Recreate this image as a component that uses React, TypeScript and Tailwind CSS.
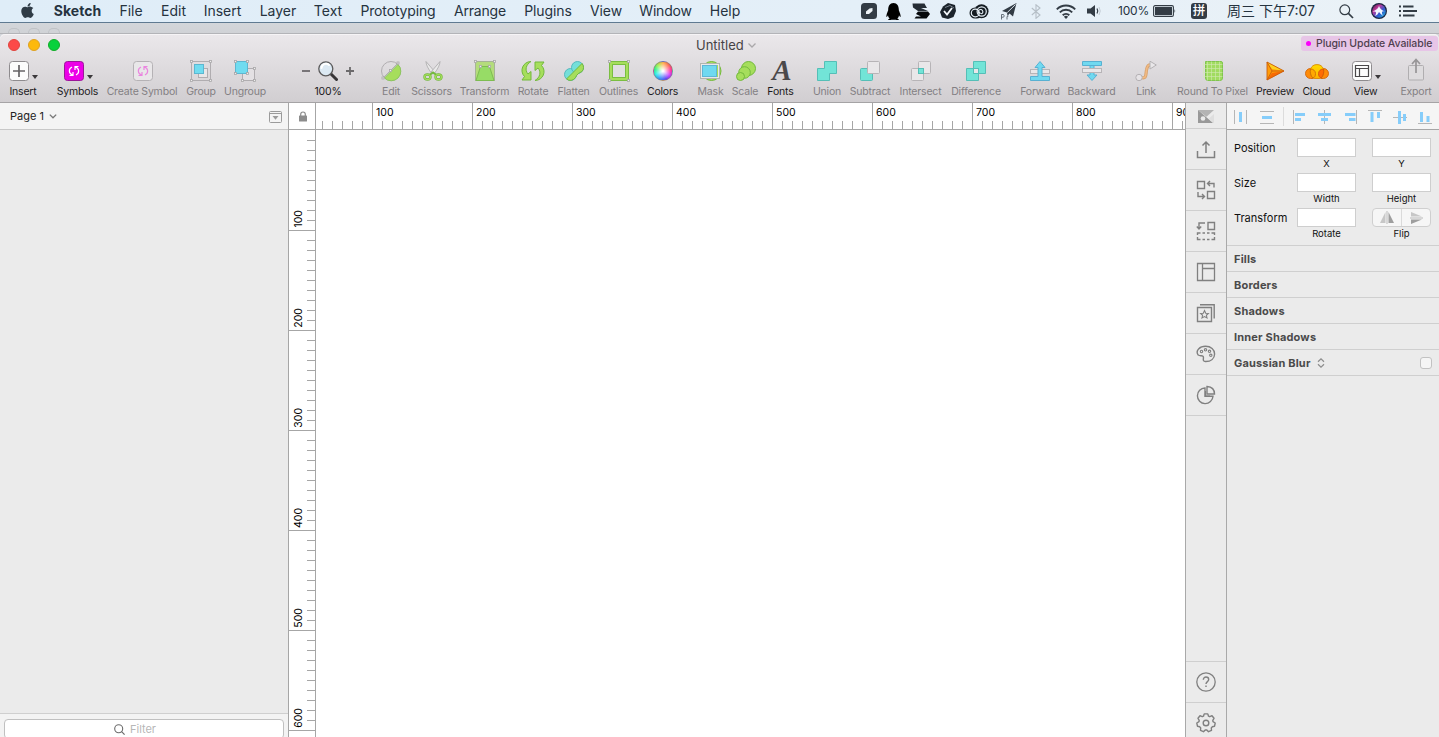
import React from "react";
import { FaApple, FaQq } from "react-icons/fa";

type SvgProps = { w: number; h: number; children: React.ReactNode; className?: string };
const S = ({ w, h, children, className = "" }: SvgProps) => (
  <svg width={w} height={h} viewBox={`0 0 ${w} ${h}`} fill="none" className={`block shrink-0 ${className}`}>
    {children}
  </svg>
);

const menus: [string, string][] = [
  ["Sketch", "ml-[16px] w-[51px] font-bold"],
  ["File", "ml-[15px] w-[26px]"],
  ["Edit", "ml-[15px] w-[29px]"],
  ["Insert", "ml-[14px] w-[41px]"],
  ["Layer", "ml-[15px] w-[40px]"],
  ["Text", "ml-[15px] w-[30px]"],
  ["Prototyping", "ml-[15px] w-[80px] tracking-[-0.15px]"],
  ["Arrange", "ml-[15px] w-[54px] tracking-[-0.2px]"],
  ["Plugins", "ml-[16px] w-[50px] tracking-[-0.1px]"],
  ["View", "ml-[16px] w-[34px] tracking-[-0.1px]"],
  ["Window", "ml-[15px] w-[55px] tracking-[-0.2px]"],
  ["Help", "ml-[15px] w-[34px]"],
];

function MenuBar() {
  return (
    <div className="flex h-[23px] shrink-0 items-center border-b border-[#5f7a91] bg-[linear-gradient(90deg,#dfedf8,#e4eff8_60%,#ebf2f7)] text-[14px] leading-[22px] text-[#26333f]">
      <FaApple className="-mt-[2px] ml-[19px] size-[17px] shrink-0 text-[#2f3b46]" />
      {menus.map(([t, c]) => (
        <div key={t} className={`flex shrink-0 justify-center whitespace-nowrap ${c}`}>{t}</div>
      ))}
      <S w={16} h={16} className="ml-[119px]">
        <rect width="16" height="16" rx="3.5" fill="#333c45" />
        <path d="M5 11V8.500L8.500 5.500 11.500 5V8L8 11Z" fill="#eef3f7" />
      </S>
      <FaQq className="ml-[8px] size-[17px] shrink-0 text-black" />
      <S w={18} h={16} className="ml-[10px]">
        <path d="M.500.500H12.500L13.500 2.500 15 5H9L16 8H6L1 4.500Z" fill="#252d35" />
        <path d="M6 8.500H16L18 11 14.500 15.500H2.500L4 13.500H9L4 11Z" fill="#05080b" />
      </S>
      <S w={17} h={16} className="ml-[10px]">
        <path d="M3 3.500 8 0 15 2 16 8 13.500 14 8 16 2 14.500 0 9Z" fill="#1c242c" />
        <path d="M4 8 7 11.500 12 5" stroke="#f3f7fa" strokeWidth="1.800" />
        <path d="M5 4.500 10 2.500 14 5" stroke="#8f99a3" strokeWidth=".8" />
      </S>
      <S w={20} h={15} className="ml-[12px]">
        <rect x=".500" y="3.500" width="12.500" height="11" rx="5.500" fill="#151c22" />
        <circle cx="12.500" cy="7.300" r="7" fill="#151c22" />
        <rect x="2.300" y="5.200" width="8" height="7.600" rx="3.800" stroke="#e6eff6" strokeWidth="1.200" />
        <circle cx="12.700" cy="7.500" r="4.600" stroke="#e6eff6" strokeWidth="1.200" />
        <path d="M10 9.500A2.300 2.300 0 1 1 12.700 9.800Q10.500 9.500 9 7" stroke="#e6eff6" strokeWidth="1.100" />
      </S>
      <S w={17} h={17} className="ml-[11px]">
        <path d="M16.500 0 13 13.500 9.500 10.500 7.500 13 7 9.500 2 8Z" fill="#333c45" />
        <path d="M15.500 1.500 7.300 9.500" stroke="#e6eff6" strokeWidth=".9" />
        <path d="M1.500 16.500V11.500H3.500Q5 13 3.500 14.200H1.500M7 16.500V13.500L8.500 13" stroke="#59636d" strokeWidth=".9" />
      </S>
      <S w={10} h={15} className="ml-[14px]">
        <path d="M.8 4 9 11 5 14.300V.8L9 4 .8 11" stroke="#b5bec6" strokeWidth="1.100" />
      </S>
      <S w={20} h={15} className="ml-[15px]">
        <path d="M.8 5.300a13 13 0 0 1 18.400 0M3.800 8.400a8.700 8.700 0 0 1 12.400 0M6.700 11.300a4.700 4.700 0 0 1 6.600 0" stroke="#333c45" strokeWidth="1.900" />
        <path d="M10 15 7.900 12.800a3 3 0 0 1 4.200 0Z" fill="#333c45" />
      </S>
      <S w={14} h={12} className="ml-[11px]">
        <path d="M0 3.500H3.500L8 0V12L3.500 8.500H0Z" fill="#333c45" />
        <path d="M10 3.500Q11.500 6 10 8.500" stroke="#333c45" strokeWidth="1.200" />
        <path d="M12 2Q14.500 6 12 10" stroke="#c3ccd4" strokeWidth="1" />
      </S>
      <div className="ml-[17px] w-[31px] shrink-0 text-[12px] tracking-[-0.2px]">100%</div>
      <S w={23} h={12} className="ml-[4px]">
        <rect x=".6" y=".6" width="19.800" height="10.800" rx="1.500" stroke="#333c45" strokeWidth="1.100" />
        <rect x="2" y="2" width="17" height="8" fill="#333c45" />
        <path d="M21.500 4V8Q23 6 21.500 4Z" fill="#333c45" />
      </S>
      <div className="ml-[15px] flex size-[16px] shrink-0 items-center justify-center rounded-[3px] bg-[#333c45] text-[12.5px] font-medium leading-none text-white">拼</div>
      <div className="ml-[20px] w-[90px] shrink-0 whitespace-nowrap text-[14px]">周三 下午7:07</div>
      <S w={15} h={15} className="ml-[22px]">
        <circle cx="5.800" cy="5.800" r="4.900" stroke="#333c45" strokeWidth="1.200" />
        <path d="M9.400 9.400 14 14" stroke="#333c45" strokeWidth="1.700" />
      </S>
      <S w={16} h={16} className="ml-[17px]">
        <defs>
          <linearGradient id="siri" x1="0" y1="0" x2="16" y2="16" gradientUnits="userSpaceOnUse">
            <stop stopColor="#12161c" /><stop offset=".35" stopColor="#c0399c" /><stop offset=".6" stopColor="#2f5bd0" /><stop offset="1" stopColor="#17d0d8" />
          </linearGradient>
        </defs>
        <circle cx="8" cy="8" r="8" fill="#1a2340" />
        <circle cx="8" cy="8" r="6.800" fill="url(#siri)" />
        <path d="M8 3C9 6 11 7.500 14.500 8.500 11 8 10 8.500 12 13 9.500 11 8.500 9.500 8 9 7 11 6 12 4 13 6 9 5 8 1.500 8.500 5 7 7 6 8 3Z" fill="#f3f6ff" />
      </S>
      <S w={18} h={12} className="ml-[12px]">
        <path d="M0 1.500H2M0 6H2M0 10.500H2" stroke="#333c45" strokeWidth="1.800" />
        <path d="M4 1.500H14.500M4 6H18M4 10.500H15.500" stroke="#333c45" strokeWidth="1.800" />
      </S>
    </div>
  );
}

const symArrows = "M5.500 14.500H9V11M8.800 14.200C4.500 12.500 4.200 8 8 6M14.500 5.500H11V9M11.200 5.800C15.500 7.500 15.800 12 12 14";
const G = "#a6de5c";
const GS = "#73b93d";
const Node = ({ x, y }: { x: number; y: number }) => (
  <rect x={x - 1} y={y - 1} width="2" height="2" fill="#eee" stroke="#a9a7a9" strokeWidth=".8" />
);
const Corners = ({ x1, y1, x2, y2 }: { x1: number; y1: number; x2: number; y2: number }) => (
  <>
    <Node x={x1} y={y1} /><Node x={x2} y={y1} /><Node x={x1} y={y2} /><Node x={x2} y={y2} />
  </>
);

const icons: Record<string, React.ReactNode> = {
  "Create Symbol": (
    <S w={20} h={20} className="ml-[2px]">
      <rect x=".5" y=".5" width="19" height="19" rx="3" fill="#e9e7e9" stroke="#b5b2b5" />
      <path d={symArrows} stroke="#ea86df" strokeWidth="1.200" />
    </S>
  ),
  Group: (
    <S w={22} h={22}>
      <rect x="1.500" y="1.500" width="19" height="19" stroke="#b0adb0" />
      <rect x="8.500" y="8.500" width="9" height="9" fill="#e8e6e8" stroke="#b0adb0" />
      <rect x="4.500" y="4.500" width="9" height="9" fill="#70dcf0" stroke="#5cb7d1" />
      <Corners x1={1.5} y1={1.5} x2={20.5} y2={20.5} />
    </S>
  ),
  Ungroup: (
    <S w={22} h={22}>
      <rect x="8.500" y="8.500" width="12" height="12" fill="#e3e0e3" stroke="#b0adb0" />
      <Corners x1={8.5} y1={8.5} x2={20.5} y2={20.5} />
      <rect x="1.500" y="1.500" width="12" height="12" fill="#70dcf0" stroke="#5cb7d1" />
      <Corners x1={1.5} y1={1.5} x2={13.5} y2={13.5} />
    </S>
  ),
  Edit: (
    <S w={22} h={22}>
      <circle cx="11" cy="11" r="9.500" stroke="#b1aeb1" />
      <path d="M18 4.500A9.500 9.500 0 0 1 4.500 18Z" fill={G} stroke="#8cc65e" />
      <path d="M18.500 2.500 2.500 18.500" stroke="#b1aeb1" />
      <Node x={18} y={3} /><Node x={3} y={18} /><Node x={10.5} y={10.5} />
    </S>
  ),
  Scissors: (
    <S w={20} h={20} className="ml-[2px]">
      <path d="M3 .5Q3 5 9 13L12 11Z" fill="#e9e9e9" stroke="#aaa8aa" strokeWidth=".8" />
      <path d="M17 .5Q17 5 11 13L8 11Z" fill="#e9e9e9" stroke="#aaa8aa" strokeWidth=".8" />
      <ellipse cx="4.500" cy="16" rx="3" ry="2.500" stroke={GS} strokeWidth="2.400" />
      <ellipse cx="15.500" cy="16" rx="3" ry="2.500" stroke={GS} strokeWidth="2.400" />
      <path d="M6.500 14 10 11.500 13.500 14" stroke={GS} strokeWidth="2" />
      <ellipse cx="4.500" cy="16" rx="3" ry="2.500" stroke={G} strokeWidth="1.200" />
      <ellipse cx="15.500" cy="16" rx="3" ry="2.500" stroke={G} strokeWidth="1.200" />
    </S>
  ),
  Transform: (
    <S w={22} h={22}>
      <rect x="1.500" y="1.500" width="19" height="19" fill="#b4dc7c" stroke="#a6b397" />
      <path d="M6.500 6.500H15.500L20 20.500H2Z" fill="#97dc66" stroke="#7dbd50" />
      <Node x={1.5} y={1.5} /><Node x={20.5} y={1.5} /><Node x={6.5} y={6.5} /><Node x={15.5} y={6.5} />
    </S>
  ),
  Rotate: (
    <S w={24} h={20}>
      <path d="M10 .5C2 .5-2 10 3.500 15.500L1 19H10V10.500L7 13C3.500 9 5 3.500 10 .5Z" fill={G} stroke={GS} />
      <path d="M14 19.500C22 19.500 26 10 20.500 4.500L23 1H14V9.500L17 7C20.500 11 19 16.500 14 19.500Z" fill={G} stroke={GS} />
    </S>
  ),
  Flatten: (
    <S w={20} h={20}>
      <circle cx="6.500" cy="13.500" r="6" fill="#75dfd9" stroke="#55b9bf" />
      <circle cx="13.500" cy="6.500" r="6" fill="#75dfd9" stroke="#55b9bf" />
      <path d="M2.500 18 18 2.500A6 6 0 0 1 18 10.500C15 12 13 13 11.500 16.500A6 6 0 0 1 2.500 18Z" fill={G} stroke={GS} />
    </S>
  ),
  Outlines: (
    <S w={22} h={22}>
      <rect x="3" y="3" width="16" height="16" fill="#e1dfe1" stroke={GS} strokeWidth="4" />
      <rect x="3" y="3" width="16" height="16" stroke={G} strokeWidth="2.300" />
      <Corners x1={1.5} y1={1.5} x2={20.5} y2={20.5} />
    </S>
  ),
  Colors: (
    <div className="size-[20px] rounded-full border border-[#807580]/60 bg-[radial-gradient(circle,#fff_5%,#ffffff00_65%),conic-gradient(#ffb04d,#ff6a50_12%,#ff2da0_24%,#c838ff_34%,#5a49f5_45%,#2f9dfa_58%,#26efe9_68%,#2df08b_78%,#9cf14a_88%,#ffb04d)]" />
  ),
  Mask: (
    <S w={22} h={22}>
      <circle cx="11.500" cy="11" r="9.500" fill={G} stroke={GS} />
      <rect x=".500" y="3.500" width="19" height="15" stroke="#b3b5af" />
      <rect x="1.500" y="4.500" width="17" height="13" stroke="#e9e9e9" />
      <rect x="2.500" y="5.500" width="14" height="11" fill="#70d9f0" stroke="#5fb6d6" />
    </S>
  ),
  Scale: (
    <S w={20} h={20} className="ml-[2px]">
      <circle cx="12.500" cy="7.500" r="7" fill={G} stroke={GS} />
      <circle cx="8.500" cy="11.500" r="5.800" fill={G} stroke={GS} />
      <circle cx="4.500" cy="15.500" r="4" fill={G} stroke={GS} />
    </S>
  ),
  Fonts: (
    <span className="-mt-[2px] ml-[3px] block font-['Liberation_Serif',serif] text-[29px] font-bold italic leading-[26px] text-[#4b494b]">A</span>
  ),
  Union: (
    <S w={20} h={20}><path d="M7.500.5H19.500V12.500H12.500V19.500H.5V7.500H7.500Z" fill="#72e4d7" stroke="#55bfb7" /></S>
  ),
  Subtract: (
    <S w={20} h={20}>
      <rect x=".5" y="7.500" width="12" height="12" rx="1" fill="#72e4d7" stroke="#55bfb7" />
      <rect x="7.500" y=".5" width="12" height="12" rx="1" fill="#e9e7e9" stroke="#b7b4b7" />
    </S>
  ),
  Intersect: (
    <S w={20} h={20}>
      <rect x="7.500" y=".5" width="12" height="12" rx="1" fill="#e9e7e9" stroke="#b7b4b7" />
      <rect x=".5" y="7.500" width="12" height="12" rx="1" fill="#e9e7e9" stroke="#b7b4b7" />
      <rect x="7.500" y="7.500" width="5" height="5" fill="#72e4d7" stroke="#55bfb7" />
    </S>
  ),
  Difference: (
    <S w={20} h={20}>
      <path d="M7.500.5H19.500V12.500H12.500V19.500H.5V7.500H7.500Z" fill="#72e4d7" stroke="#55bfb7" />
      <rect x="7.500" y="7.500" width="5" height="5" fill="#e9e7e9" stroke="#55bfb7" />
    </S>
  ),
  Forward: (
    <S w={20} h={20}>
      <rect x=".5" y="8.500" width="19" height="4" fill="#e9e7e9" stroke="#b7b4b7" />
      <path d="M.5 15.500H8V6.500H5L10 .5 15 6.500H12V15.500H19.500V19.500H.5Z" fill="#70d9f0" stroke="#58b1d2" />
    </S>
  ),
  Backward: (
    <S w={20} h={20}>
      <path d="M8 4V14H5L10 19.500 15 14H12V4" fill="#70d9f0" stroke="#58b1d2" />
      <rect x=".5" y="7.500" width="19" height="4" fill="#e9e7e9" stroke="#b7b4b7" />
      <path d="M.5.5H19.500V4.500H.5Z" fill="#70d9f0" stroke="#58b1d2" />
    </S>
  ),
  Link: (
    <S w={22} h={22}>
      <path d="M6 17.500C12 19 10.500 15 11.500 10 12.200 6 13 4.500 17 5" stroke="#d7a06b" strokeWidth="3.200" />
      <path d="M6 17.500C12 19 10.500 15 11.500 10 12.200 6 13 4.500 17 5" stroke="#f1ba83" strokeWidth="1.600" />
      <circle cx="4" cy="17.500" r="3.200" fill="#e6e3e6" stroke="#b4b1b4" />
      <path d="M15 1.200 21.300 5 15 9Z" fill="#e9e7e9" stroke="#b4b1b4" />
    </S>
  ),
  "Round To Pixel": (
    <S w={20} h={20} className="ml-[1px]">
      <path d="M2.500.500H18Q19.500.500 19.500 2V17Q19.500 19.500 17 19.500H5Q2.500 19.500 2.500 17Z" fill="#a1dc60" stroke="#80c54e" />
      <path d="M.500.500V17M4.500.500V19.500M8.500.500V19.500M12.500.500V19.500M16.500.500V19.500M0 3.500H19.500M0 7.500H19.500M0 11.500H19.500M0 15.500H19.500" stroke="#d3e9b4" strokeWidth=".6" />
    </S>
  ),
  Preview: (
    <S w={19} h={20}>
      <path d="M1 1 18 10 1 19Z" fill="#ff9c08" />
      <path d="M1 1 18 10 6 8Z" fill="#ffd01d" />
      <path d="M1 19 18 10 6 12Z" fill="#f76a04" />
      <path d="M1 1 18 10 1 19ZM1 1 6 10 18 10M6 10 1 19" stroke="#c95d0d" strokeWidth=".9" strokeLinejoin="round" />
    </S>
  ),
  Cloud: (
    <S w={24} h={16}>
      <defs>
        <linearGradient id="cloud" x1="0" y1="0" x2="0" y2="16" gradientUnits="userSpaceOnUse">
          <stop stopColor="#ffe000" /><stop offset="1" stopColor="#ffb000" />
        </linearGradient>
      </defs>
      <path d="M5.500 15.500A5 5 0 0 1 5.500 5.500H8V15.500ZM18.500 15.500A5 5 0 0 0 18.500 5.500H16V15.500Z" fill="#ff8b08" stroke="#d0670b" strokeWidth=".9" />
      <path d="M5.500 6A7 7 0 0 1 18.500 6C19.500 10.500 18 15.500 14 15.500H10C6 15.500 4.500 10.500 5.500 6Z" fill="url(#cloud)" stroke="#d98a05" strokeWidth=".9" />
      <path d="M5.500 6C8.500 6 10.500 8 10.500 10.500 10.500 13 9.500 14.500 8 15 5.500 13 5 9 5.500 6Z" fill="#ffa800" stroke="#c96a05" strokeWidth=".8" />
      <path d="M18.500 6C15.500 6 13.500 8 13.500 10.500 13.500 13 14.500 14.500 16 15 18.500 13 19 9 18.500 6Z" fill="#ff6c05" stroke="#d0500b" strokeWidth=".8" />
    </S>
  ),
  Export: (
    <S w={18} h={24} className="-mt-[2px]">
      <rect x="1.500" y="7.500" width="15" height="14.500" rx="1" fill="#dedcde" stroke="#b0aeb0" />
      <path d="M9 15V2M5 6 9 1.500 13 6" stroke="#979597" strokeWidth="1.700" />
    </S>
  ),
};

const Tri = ({ className = "" }) => <S w={6} h={4} className={className}><path d="M0 0H6L3 4Z" fill="#3b393b" /></S>;

const Label = ({ t, on = false }: { t: string; on?: boolean }) => (
  <div className={`whitespace-nowrap text-[10.5px] leading-[16px] tracking-[-0.18px] ${on ? "text-[#1d1b1d]" : "text-[#838083]"}`}>{t}</div>
);

const Tool = ({ t, c, on = false }: { t: string; c: string; on?: boolean }) => (
  <div className={`flex shrink-0 flex-col items-center ${c}`}>
    <div className="flex h-[26px] items-center justify-center">{icons[t]}</div>
    <Label t={t} on={on} />
  </div>
);

function Toolbar() {
  return (
    <div className="flex h-[44px] w-full">
      <div className="ml-[8px] flex w-[30px] shrink-0 flex-col items-center">
        <div className="flex h-[26px] w-full items-center">
          <S w={20} h={20} className="ml-[1px]">
            <rect x=".500" y=".500" width="19" height="19" rx="3" fill="#fcfcfc" stroke="#8e8b8e" />
            <path d="M10 4V16M4 10H16" stroke="#656365" strokeWidth="1.700" />
          </S>
          <Tri className="ml-[3px] mt-[12px]" />
        </div>
        <Label t="Insert" on />
      </div>
      <div className="ml-[18px] flex w-[43px] shrink-0 flex-col items-center">
        <div className="flex h-[26px] w-full items-center pl-[8px]">
          <S w={20} h={20}>
            <rect x=".500" y=".500" width="19" height="19" rx="3" fill="#ec00e7" stroke="#9b1799" />
            <path d={symArrows} stroke="#fff" strokeWidth="1.200" />
          </S>
          <Tri className="ml-[3px] mt-[12px]" />
        </div>
        <Label t="Symbols" on />
      </div>
      <Tool t="Create Symbol" c="ml-[7px] w-[72px]" />
      <Tool t="Group" c="ml-[7px] w-[32px]" />
      <Tool t="Ungroup" c="ml-[6px] w-[44px]" />
      <div className="ml-[35px] flex w-[52px] shrink-0 flex-col items-center">
        <div className="flex h-[26px] w-full items-center justify-between">
          <S w={8} h={8}><path d="M0 4H8" stroke="#6c6a6c" strokeWidth="1.800" /></S>
          <S w={20} h={20}>
            <path d="M13 13 18.500 18.500" stroke="#373537" strokeWidth="3" strokeLinecap="round" />
            <circle cx="7.800" cy="7.800" r="7" fill="#dce9f3" stroke="#5b5a5b" strokeWidth="1.300" />
            <path d="M3.500 7A4.500 4.500 0 0 1 11 4" stroke="#fff" strokeWidth="2" strokeLinecap="round" />
          </S>
          <S w={8} h={8}><path d="M0 4H8M4 0V8" stroke="#6c6a6c" strokeWidth="1.800" /></S>
        </div>
        <Label t="100%" on />
      </div>
      <Tool t="Edit" c="ml-[26px] w-[22px]" />
      <Tool t="Scissors" c="ml-[9px] w-[41px]" />
      <Tool t="Transform" c="ml-[8px] w-[49px]" />
      <Tool t="Rotate" c="ml-[8px] w-[32px]" />
      <Tool t="Flatten" c="ml-[8px] w-[33px]" />
      <Tool t="Outlines" c="ml-[9px] w-[39px]" />
      <Tool t="Colors" c="ml-[9px] w-[31px]" on />
      <Tool t="Mask" c="ml-[20px] w-[25px]" />
      <Tool t="Scale" c="ml-[9px] w-[26px]" />
      <Tool t="Fonts" c="ml-[9px] w-[27px]" on />
      <Tool t="Union" c="ml-[19px] w-[28px]" />
      <Tool t="Subtract" c="ml-[8px] w-[42px]" />
      <Tool t="Intersect" c="ml-[8px] w-[43px]" />
      <Tool t="Difference" c="ml-[9px] w-[50px]" />
      <Tool t="Forward" c="ml-[18px] w-[42px]" />
      <Tool t="Backward" c="ml-[7px] w-[47px]" />
      <Tool t="Link" c="ml-[20px] w-[22px]" />
      <Tool t="Round To Pixel" c="ml-[20px] w-[71px]" />
      <Tool t="Preview" c="ml-[8px] w-[38px]" on />
      <Tool t="Cloud" c="ml-[8px] w-[29px]" on />
      <div className="ml-[21px] flex w-[30px] shrink-0 flex-col items-center">
        <div className="flex h-[26px] w-full items-center">
          <S w={20} h={20}>
            <rect x=".500" y=".500" width="19" height="19" rx="3" fill="#fcfcfc" stroke="#8e8b8e" />
            <path d="M3.500 4.500H16.500V15.500H3.500ZM3.500 7.500H16.500M7.500 7.500V15.500" stroke="#4b494b" strokeWidth="1.200" />
          </S>
          <Tri className="ml-[3px] mt-[12px]" />
        </div>
        <div className="-ml-[3px]"><Label t="View" on /></div>
      </div>
      <Tool t="Export" c="ml-[17px] w-[34px]" />
    </div>
  );
}

function TitleBar() {
  return (
    <div className="h-[69px] shrink-0 rounded-t-[5px] border-b border-[#a5a3a5] bg-[linear-gradient(#ebe8eb,#d1ced1)] shadow-[inset_0_1px_0_#f6f4f6]">
      <div className="flex h-[24px] items-start">
        <div className="flex w-[601px] gap-[8px] pl-[8px] pt-[5px]">
          <div className="size-[12px] rounded-full border border-[#e0443e] bg-[#fc4a48]" />
          <div className="size-[12px] rounded-full border border-[#dea123] bg-[#fdb90c]" />
          <div className="size-[12px] rounded-full border border-[#12ac28] bg-[#08d13c]" />
        </div>
        <div className="ml-[95px] flex w-[60px] items-center pt-[3px] text-[13px] leading-[17px] text-[#454345]">
          Untitled
          <S w={8} h={5} className="ml-[4px]"><path d="M.5.500 4 4 7.500.500" stroke="#aaa8aa" strokeWidth="1.300" /></S>
        </div>
        <div className="ml-auto mr-[1px] mt-[2px] flex h-[15px] w-[137px] items-center rounded-[3px] bg-[#e7c5e7] pl-[5px] leading-[15px] text-[#4f3f4f]">
          <span className="mr-[5px] size-[5px] shrink-0 rounded-full bg-[#fb00fb]" />
          <span className="whitespace-nowrap text-[10.5px] font-medium tracking-[-0.09px]">Plugin Update Available</span>
        </div>
      </div>
      <Toolbar />
    </div>
  );
}

function HRuler() {
  return (
    <div className="flex h-[27px] w-[869px] overflow-hidden border-b border-[#a6a6a6] bg-white pl-[6px]">
      {Array.from({ length: 87 }, (_, i) => {
        const major = (i + 5) % 10 === 0;
        return (
          <div key={i} className="flex w-[10px] shrink-0 items-end">
            <div className={`w-px shrink-0 bg-[#a6a6a6] ${major ? "h-[26px]" : "h-[8px]"}`} />
            {major && <span className="mb-[9px] ml-[3px] w-0 whitespace-nowrap text-[10.5px] leading-[14px] text-black">{((i + 5) / 10) * 100}</span>}
          </div>
        );
      })}
    </div>
  );
}

function VRuler() {
  return (
    <div className="flex min-h-0 flex-1 flex-col overflow-hidden border-r border-[#a6a6a6] bg-white pt-[10px]">
      {Array.from({ length: 60 }, (_, i) => {
        const n = i + 1;
        const major = n % 10 === 0;
        return (
          <div key={i} className="relative flex h-[10px] shrink-0 items-start justify-end">
            <div className={`h-px bg-[#a6a6a6] ${major ? "w-[26px]" : "w-[8px]"}`} />
            {major && (
              <span className="absolute bottom-[12px] left-[3px] rotate-180 text-[10.5px] leading-[14px] text-black [writing-mode:vertical-rl]">{n * 10}</span>
            )}
          </div>
        );
      })}
    </div>
  );
}

const K = "#808080";
const strip: React.ReactNode[] = [
  <S w={20} h={20} className="mt-[1px]"><path d="M1.500 11V17.500H18.500V11M10 13V2.500M6.500 5.500 10 2 13.500 5.500" stroke={K} strokeWidth="1.500" /></S>,
  <S w={20} h={20}><path d="M1.500 1.500H8.500V8.500H1.500ZM11.500 11.500H18.500V18.500H11.500ZM18 7.500V3.500H12M14 1 11.500 3.500 14 6M2 12V16.500H8M6 14 8.500 16.500 6 19" stroke={K} strokeWidth="1.400" /></S>,
  <S w={20} h={20}><path d="M12 1.500H18.500V8.500H12ZM9 2H3V8M.8 5.500 3 8 5.200 5.500" stroke={K} strokeWidth="1.400" /><path d="M4.500 12H1.500V14M1.500 16V18.500H4.500M6.500 18.500H9M11 18.500H13.500M15.500 18.500H18.500V16M18.500 14V12H15.500M13.500 12H11M9 12H6.500" stroke={K} strokeWidth="1.400" /></S>,
  <S w={20} h={20}><path d="M1.500 1.500H18.500V18.500H1.500ZM6.500 1.500V18.500M6.500 6.500H18.500" stroke={K} strokeWidth="1.300" /></S>,
  <S w={20} h={20}><path d="M1.500 4.500H15.500V18.500H1.500ZM4 1.800H18.200V15.500" stroke={K} strokeWidth="1.400" /><path d="M8.500 7.500 9.700 10.200 12.400 10.500 10.400 12.300 11 15 8.500 13.600 6 15 6.600 12.300 4.600 10.500 7.300 10.200Z" stroke={K} strokeWidth="1.100" /></S>,
  <S w={20} h={20}><path d="M2.200 11C-1 6.500 4 2.300 9.500 2.300 15 2.300 18.600 5.500 18.600 10 18.500 14.500 15 17.600 9.500 17.500 5.500 17.300 8.500 13.500 7 12.200 5.500 11 4.500 12.500 2.200 11Z" stroke={K} strokeWidth="1.400" /><g stroke={K} strokeWidth="1.100"><circle cx="5.500" cy="7.500" r="1.200" /><circle cx="9.500" cy="5.800" r="1.200" /><circle cx="13.500" cy="7.300" r="1.200" /><circle cx="14.800" cy="11.300" r="1.200" /></g></S>,
  <S w={20} h={20}><path d="M9 3A7.800 7.800 0 1 0 17 11.300H9ZM11 1.500V9H18.500Q18.500 2 11 1.500Z" stroke={K} strokeWidth="1.400" /><path d="M9.500 6V11H14" stroke={K} strokeWidth="1.200" /></S>,
];

function Strip() {
  return (
    <div className="flex w-[42px] shrink-0 flex-col border-x border-[#a9a9a9] bg-[#ebebeb]">
      <div className="flex h-[26px] shrink-0 items-center justify-center border-b border-[#cfcfcf]">
        <S w={16} h={13} className="mt-[1px]">
          <path d="M0 0H16L8.500 6.800Z" fill="#b4b4b4" />
          <path d="M0 0V13H15Z" fill="#999" />
          <path d="M16 4V13H15.500L11 8.500Z" fill="#dedede" />
          <circle cx="5" cy="8.500" r="2.300" fill="#ebebeb" />
        </S>
      </div>
      {strip.map((n, i) => (
        <div key={i} className="flex h-[41px] shrink-0 items-center justify-center border-b border-[#cfcfcf]">{n}</div>
      ))}
      <div className="flex-1" />
      <div className="flex h-[41px] shrink-0 items-center justify-center border-t border-[#cfcfcf]">
        <S w={20} h={20}>
          <circle cx="10" cy="10" r="9.200" stroke={K} strokeWidth="1.300" />
          <path d="M7.300 7.800C7.300 4 12.700 4.300 12.700 7.500 12.700 9.700 10 9.500 10 12" stroke={K} strokeWidth="1.400" />
          <path d="M10 13.500V15" stroke={K} strokeWidth="1.400" />
        </S>
      </div>
      <div className="flex h-[35px] shrink-0 justify-center border-t border-[#cfcfcf] pt-[10px]">
        <S w={20} h={20}>
          <path d="M7.500 3.200 8.200.9H11.800L12.500 3.200 13.800 3.700 16 2.700 18 5.300 16.800 7.300 17 8.700 19.200 10 18.500 13.300 16.200 13.800 15.300 15 15.500 17.300 12.500 18.700 10.800 17H9.200L7.500 18.700 4.500 17.300 4.700 15 3.800 13.800 1.500 13.300.800 10 3 8.700 3.200 7.300 2 5.300 4 2.700 6.200 3.700Z" stroke={K} strokeWidth="1.400" strokeLinejoin="round" />
          <circle cx="10" cy="10" r="2.800" stroke={K} strokeWidth="1.400" />
        </S>
      </div>
    </div>
  );
}

const B = "#86cdfa";
const aligns: [string, string, string][] = [
  ["M1.500 1V15M13.500 1V15", "M7.500 3V13", "ml-[6px]"],
  ["M1 2.500H15M1 14.500H15", "M3 8.500H13", "ml-[10px]"],
  ["M1.500 1V15", "M3 5.500H13M3 10.500H9", "ml-[8px]"],
  ["M8.500 1V15", "M2 5.500H15M5 10.500H12", "ml-[8px]"],
  ["M13.500 1V15", "M2 5.500H12.500M6 10.500H12.500", "ml-[11px]"],
  ["M1 1.500H15", "M5 3V13M11.500 3V9", "ml-[8px]"],
  ["M1 8.500H15", "M7.500 2V15M12.500 5V12", "ml-[9px]"],
  ["M1 14.500H15", "M4.500 3V13M11 7V13", "ml-[9px]"],
];

const Field = ({ t }: { t: string }) => (
  <div className="flex w-[59px] flex-col items-center">
    <div className="h-[19px] w-full border border-[#cecece] bg-white" />
    <div className="text-[9.5px] leading-[13px] text-[#111]">{t}</div>
  </div>
);

const FieldRow = ({ t, a, children }: { t: string; a: string; children: React.ReactNode }) => (
  <div className="flex h-[35px]">
    <div className="w-[63px] pt-[3px] text-[11px] leading-[14px] text-[#111]">{t}</div>
    <Field t={a} />
    <div className="ml-[16px]">{children}</div>
  </div>
);

function Inspector() {
  return (
    <div className="flex w-[212px] shrink-0 flex-col bg-[#ebebeb]">
      <div className="flex h-[27px] shrink-0 items-center border-b border-[#a6a6a6] bg-[#f5f5f5] pt-[2px]">
        {aligns.map(([g, b, c], i) => (
          <React.Fragment key={i}>
            <S w={16} h={16} className={c}>
              <path d={g} stroke="#b6b6b6" />
              <path d={b} stroke={B} strokeWidth="3" />
            </S>
            {i === 1 && <div className="-mt-[2px] ml-[8px] h-[19px] w-px shrink-0 bg-[#dcdcdc]" />}
          </React.Fragment>
        ))}
      </div>
      <div className="h-[116px] shrink-0 border-b border-[#cfcfcf] pl-[7px] pt-[8px]">
        <FieldRow t="Position" a="X"><Field t="Y" /></FieldRow>
        <FieldRow t="Size" a="Width"><Field t="Height" /></FieldRow>
        <FieldRow t="Transform" a="Rotate">
          <div className="flex w-[59px] flex-col items-center">
            <div className="flex h-[19px] w-full rounded-[4px] border border-[#cfcfcf] bg-[#f6f6f6]">
              <div className="flex flex-1 items-center justify-center border-r border-[#dadada]">
                <S w={14} h={13}><path d="M5.500 1V12H0Z" fill="#c7c7c7" /><path d="M8.500 1V12H14Z" fill="#9e9e9e" /><path d="M7 0V13" stroke="#bbb" /></S>
              </div>
              <div className="flex flex-1 items-center justify-center">
                <S w={13} h={14}><path d="M1 5.500H12L1 1Z" fill="#c7c7c7" /><path d="M1 8.500H12L1 13Z" fill="#9e9e9e" /><path d="M0 7H13" stroke="#aaa" strokeWidth=".8" /></S>
              </div>
            </div>
            <div className="text-[9.5px] leading-[13px] text-[#111]">Flip</div>
          </div>
        </FieldRow>
      </div>
      {["Fills", "Borders", "Shadows", "Inner Shadows", "Gaussian Blur"].map((t) => (
        <div key={t} className="flex h-[26px] shrink-0 items-center border-b border-[#cfcfcf] pl-[7px] pr-[7px] pt-[2px] text-[11px] font-bold text-[#4a4a4a]">
          <span className="tracking-[0.18px]">{t}</span>
          {t === "Gaussian Blur" && (
            <>
              <S w={8} h={10} className="-mt-[1px] ml-[6px]"><path d="M1 3.800 4 .9 7 3.800M1 6.200 4 9.100 7 6.200" stroke="#8d8d8d" strokeWidth="1.200" /></S>
              <span className="-mt-[2px] ml-auto size-[12px] rounded-[3px] border border-[#c2c2c2] bg-[#f5f5f5]" />
            </>
          )}
        </div>
      ))}
    </div>
  );
}

export default function App() {
  return (
    <div className="flex h-[737px] w-[1439px] flex-col overflow-hidden bg-[#d3d6db] font-['Inter','Noto_Sans_CJK_SC',sans-serif]">
      <MenuBar />
      <div className="flex h-[11px] shrink-0 items-end gap-[8px] overflow-hidden rounded-t-[5px] border-b border-[#b3b4b8] bg-[linear-gradient(#d3d6da,#d0d2d6)] pl-[8px]">
        {[0, 1, 2].map((k) => (
          <div key={k} className="h-[5px] w-[12px] rounded-t-full border border-b-0 border-[#c0c3c6]" />
        ))}
      </div>
      <TitleBar />
      <div className="flex min-h-0 flex-1">
        <div className="flex w-[288px] shrink-0 flex-col bg-[#ebebeb]">
          <div className="flex h-[27px] shrink-0 items-center border-b border-[#c8c8c8] bg-[#f4f4f4] pl-[10px] pr-[6px] text-[11px] text-[#222]">
            <span>Page 1</span>
            <S w={8} h={5} className="ml-[5px]"><path d="M.8.600 4 3.800 7.200.600" stroke="#777" strokeWidth="1.300" /></S>
            <S w={13} h={12} className="ml-auto mt-[2px]">
              <rect x=".500" y=".500" width="12" height="11" rx="1" stroke="#9b9b9b" />
              <path d="M.5 2.500H12.500" stroke="#9b9b9b" /><path d="M3.500 5H9.500L6.500 8.800Z" fill="#9b9b9b" />
            </S>
          </div>
          <div className="flex-1" />
          <div className="h-[24px] shrink-0 border-t border-[#cfcfcf] bg-[#f3f3f3] px-[4px] pt-[5px]">
            <div className="flex h-[20px] items-center justify-center gap-[5px] rounded-[4px] border border-[#c0c0c0] bg-white pr-[18px] text-[11px] text-[#b7b7b7]">
              <S w={11} h={11}><circle cx="4.700" cy="4.700" r="4" stroke="#6b6b6b" strokeWidth="1.100" /><path d="M7.600 7.600 10.600 10.600" stroke="#6b6b6b" strokeWidth="1.200" /></S>
              Filter
            </div>
          </div>
        </div>
        <div className="flex w-[28px] shrink-0 flex-col border-l border-[#a6a6a6]">
          <div className="flex h-[27px] shrink-0 items-center justify-center border-b border-r border-[#a6a6a6] bg-white pl-[2px] pt-[1px]">
            <S w={8} h={11}><rect y="4.500" width="8" height="6" rx=".6" fill="#8c8c8c" /><path d="M1.700 5V3.300A2.300 2.300 0 0 1 6.300 3.300V5" stroke="#8c8c8c" strokeWidth="1.200" /></S>
          </div>
          <VRuler />
        </div>
        <div className="flex w-[869px] shrink-0 flex-col bg-white">
          <HRuler />
        </div>
        <Strip />
        <Inspector />
      </div>
    </div>
  );
}
